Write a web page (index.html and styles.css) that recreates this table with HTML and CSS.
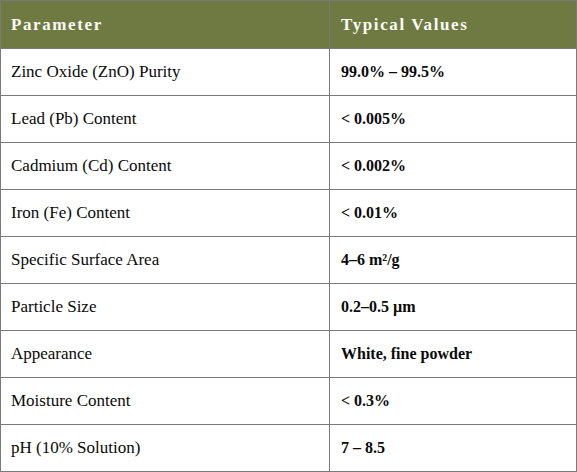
FILE: index.html
```html
<!DOCTYPE html>
<html>
<head>
<meta charset="utf-8">
<link rel="stylesheet" href="styles.css">
</head>
<body>
<table class="spec">
  <thead>
    <tr><th class="c1">Parameter</th><th class="c2">Typical Values</th></tr>
  </thead>
  <tbody>
    <tr><td>Zinc Oxide (ZnO) Purity</td><td class="val">99.0% – 99.5%</td></tr>
    <tr><td>Lead (Pb) Content</td><td class="val">&lt; 0.005%</td></tr>
    <tr><td>Cadmium (Cd) Content</td><td class="val">&lt; 0.002%</td></tr>
    <tr><td>Iron (Fe) Content</td><td class="val">&lt; 0.01%</td></tr>
    <tr><td>Specific Surface Area</td><td class="val">4–6 m²/g</td></tr>
    <tr><td>Particle Size</td><td class="val">0.2–0.5 µm</td></tr>
    <tr><td>Appearance</td><td class="val">White, fine powder</td></tr>
    <tr><td>Moisture Content</td><td class="val">&lt; 0.3%</td></tr>
    <tr><td>pH (10% Solution)</td><td class="val">7 – 8.5</td></tr>
  </tbody>
</table>
</body>
</html>
```
FILE: styles.css
```css
html, body {
  margin: 0;
  padding: 0;
  background: #ffffff;
}
.spec {
  width: 577px;
  border-collapse: collapse;
  font-family: "Liberation Serif", "DejaVu Serif", serif;
  color: #0a0a0a;
  table-layout: fixed;
}
.spec th, .spec td {
  border: 1px solid #7a7a7a;
  text-align: left;
  vertical-align: middle;
  padding: 0 10px;
}
.spec th {
  background: #6f7a43;
  color: #fbfbf5;
  font-weight: bold;
  font-size: 17px;
  letter-spacing: 1.6px;
  height: 47px;
}
.spec .c1 { width: 308px; }
.spec th.c2, .spec td.val { padding-left: 11px; }
.spec td {
  height: 46px;
  font-size: 17px;
}
.spec td.val {
  font-weight: bold;
  font-size: 16px;
}
```
